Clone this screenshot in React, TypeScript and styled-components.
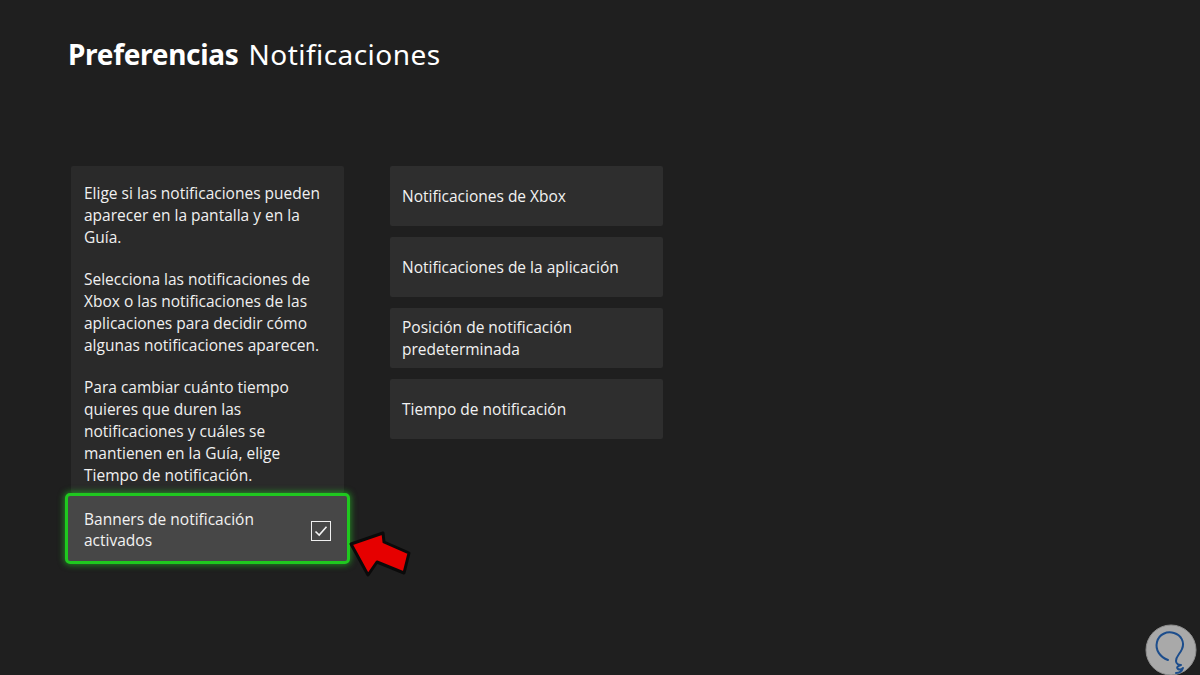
import React from "react";
import styled, { createGlobalStyle } from "styled-components";

const Global = createGlobalStyle`
  html, body { margin: 0; padding: 0; background: #1f1f1f; }
  body { font-family: "Open Sans", "Noto Sans", sans-serif; color: #f2f2f2; }
`;

const Page = styled.div`
  position: relative;
  width: 1200px;
  height: 675px;
  background: #1f1f1f;
  overflow: hidden;
  box-sizing: border-box;
  padding: 34px 0 0 68px;
`;

const Title = styled.h1`
  margin: 0;
  font-size: 28px;
  line-height: 40px;
  font-weight: 400;
  color: #ffffff;
  letter-spacing: 0.45px;
  font-family: "Noto Sans", "Open Sans", sans-serif;
`;

const Strong = styled.span`
  font-weight: 700;
  letter-spacing: -0.3px;
  margin-right: 10px;
`;

const Content = styled.div`
  display: flex;
  gap: 46px;
  margin: 92px 0 0 3px;
  align-items: flex-start;
`;

const LeftColumn = styled.div`
  width: 273px;
  display: flex;
  flex-direction: column;
`;

const InfoPanel = styled.div`
  background: #2a2a2a;
  padding: 16px 10px 7px 13px;
  border-radius: 2px;
`;

const Paragraph = styled.p`
  margin: 0 0 20px 0;
  font-size: 15.5px;
  line-height: 22px;
  color: #f0f0f0;
  &:last-child { margin-bottom: 0; }
`;

const Banner = styled.div`
  position: relative;
  margin: 0 -6px;
  height: 71px;
  box-sizing: border-box;
  border: 3px solid #1fc81f;
  border-radius: 5px;
  background: #474747;
  box-shadow: 0 0 6px 1px rgba(40, 220, 40, 0.55);
  display: flex;
  align-items: center;
  justify-content: space-between;
  padding: 2px 16px 0 16px;
`;

const BannerLabel = styled.span`
  font-size: 15.5px;
  line-height: 21px;
  color: #f2f2f2;
`;

const CheckBox = styled.span`
  width: 18px;
  height: 18px;
  border: 1.5px solid #f0f0f0;
  display: flex;
  align-items: center;
  justify-content: center;
  margin-top: 2px;
`;

const Arrow = styled.svg`
  position: absolute;
  left: calc(100% + 1px);
  top: 32px;
  width: 64px;
  height: 52px;
`;

const RightColumn = styled.div`
  width: 273px;
  display: flex;
  flex-direction: column;
  gap: 11px;
`;

const MenuButton = styled.div`
  height: 60px;
  box-sizing: border-box;
  background: #2e2e2e;
  border-radius: 2px;
  display: flex;
  align-items: center;
  padding: 0 12px;
  font-size: 15.5px;
  line-height: 22px;
  color: #f2f2f2;
`;

const Logo = styled.svg`
  position: absolute;
  right: 3px;
  bottom: -1px;
  width: 52px;
  height: 52px;
`;

export default function App() {
  return (
    <Page>
      <Global />
      <Title>
        <Strong>Preferencias</Strong>Notificaciones
      </Title>
      <Content>
        <LeftColumn>
          <InfoPanel>
            <Paragraph>
              Elige si las notificaciones pueden aparecer en la pantalla y en la Guía.
            </Paragraph>
            <Paragraph>
              Selecciona las notificaciones de Xbox o las notificaciones de las
              aplicaciones para decidir cómo algunas notificaciones aparecen.
            </Paragraph>
            <Paragraph>
              Para cambiar cuánto tiempo quieres que duren las notificaciones y
              cuáles se mantienen en la Guía, elige Tiempo de notificación.
            </Paragraph>
          </InfoPanel>
          <Banner>
            <BannerLabel>
              Banners de notificación
              <br />
              activados
            </BannerLabel>
            <CheckBox>
              <svg width="14" height="12" viewBox="0 0 14 12">
                <path d="M1.5 6.5 L5.2 10 L12.5 1.8" fill="none" stroke="#f2f2f2" strokeWidth="1.6" />
              </svg>
            </CheckBox>
            <Arrow viewBox="0 0 64 52">
              <path
                d="M3 16 L35 5 L36 14 L61 25 L56 45 L29 34 L20 47 Z"
                fill="#e60000"
                stroke="#0a0a0a"
                strokeWidth="3"
                strokeLinejoin="round"
              />
            </Arrow>
          </Banner>
        </LeftColumn>
        <RightColumn>
          <MenuButton>Notificaciones de Xbox</MenuButton>
          <MenuButton>Notificaciones de la aplicación</MenuButton>
          <MenuButton>
            Posición de notificación
            <br />
            predeterminada
          </MenuButton>
          <MenuButton>Tiempo de notificación</MenuButton>
        </RightColumn>
      </Content>
      <Logo viewBox="0 0 52 52">
        <circle cx="26" cy="26" r="25" fill="#a9a9a9" stroke="#8e8e8e" strokeWidth="1" />
        <path
          d="M23 36 C15 33 10 26 12 18 C14 10 22 7 29 9 C36 11 40 18 37 25 C35 30 31 32 31 37 C31 40 34 41 36 41 C33 42 31 43 33 45 C35 46 37 45 38 44 C37 47 34 49 31 49"
          fill="none"
          stroke="#1c4d8c"
          strokeWidth="2"
          strokeLinecap="round"
          strokeLinejoin="round"
        />
      </Logo>
    </Page>
  );
}
